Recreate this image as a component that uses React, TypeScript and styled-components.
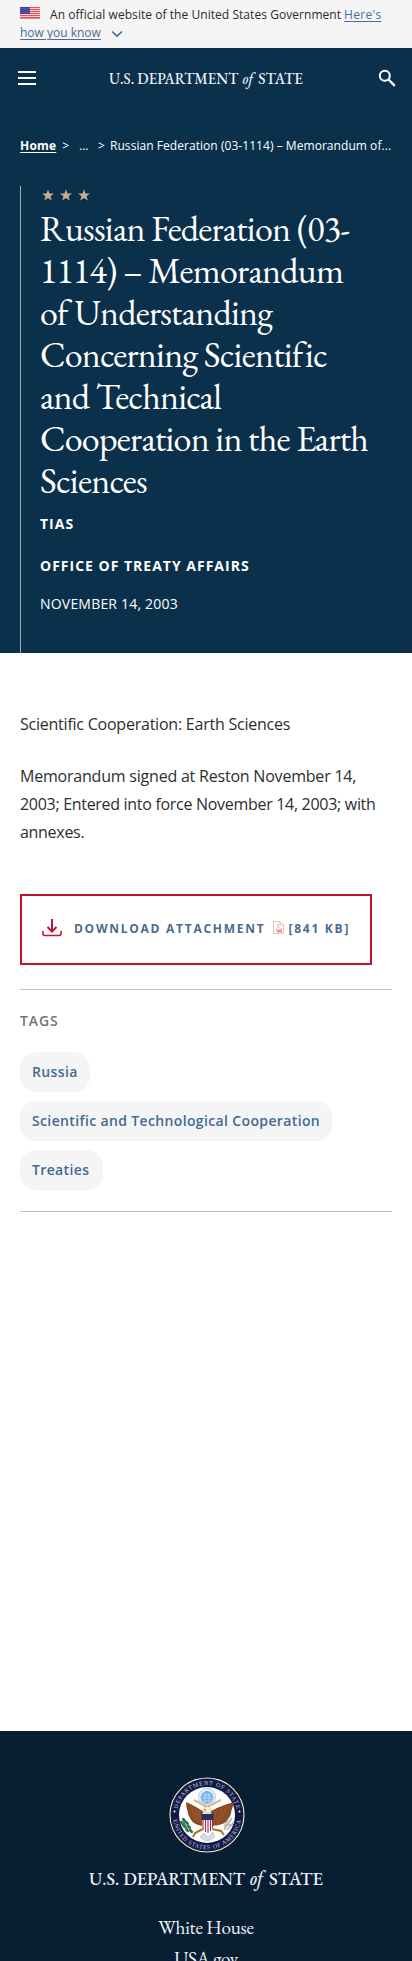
import React from "react";
import styled, { createGlobalStyle } from "styled-components";

const sans = `"Open Sans", "Noto Sans", sans-serif`;
const serif = `"EB Garamond", "Liberation Serif", serif`;

const GlobalStyle = createGlobalStyle`
  * { box-sizing: border-box; }
  body { margin: 0; background: #fff; font-family: ${sans}; color: #323a45; }
  h1, h2, p, ul { margin: 0; padding: 0; font-weight: 400; }
`;

const Page = styled.div`
  height: 1961px;
  overflow: hidden;
  display: flex;
  flex-direction: column;
`;

const Banner = styled.aside`
  height: 48px;
  padding: 6px 20px 0;
  background: #f5f5f5;
  font-size: 12px;
  line-height: 18px;
  white-space: nowrap;
  color: #2b2b2b;
`;

const BannerRow = styled.div`
  display: flex;
  align-items: center;
  height: 18px;
  letter-spacing: 0.05px;
`;

const FlagIcon = styled.svg`
  width: 20px;
  height: 12px;
  margin: -4px 10px 0 0;
`;

const BannerLink = styled.a<{ $tracking?: number }>`
  color: #4a6d94;
  text-decoration: underline;
  text-underline-offset: 2px;
  margin-left: 3px;
  letter-spacing: ${(p) => p.$tracking ?? 0}px;
  &:first-child { margin-left: 0; }
`;

const Chevron = styled.svg`
  width: 12px;
  height: 8px;
  margin: 1px 0 0 10px;
`;

const Header = styled.header`
  height: 605px;
  background: #0a304b;
  color: #fff;
  display: flex;
  flex-direction: column;
`;

const NavBar = styled.nav`
  height: 60px;
  display: flex;
  align-items: center;
  justify-content: space-between;
  padding: 0 16px 0 18px;
`;

const Burger = styled.span`
  width: 18px;
  height: 14px;
  border-top: 2px solid #fff;
  border-bottom: 2px solid #fff;
  display: flex;
  align-items: center;
  &::before { content: ""; width: 18px; height: 2px; background: #fff; }
`;

const Wordmark = styled.svg<{ $w: number; $h: number }>`
  width: ${(p) => p.$w}px;
  height: ${(p) => p.$h}px;
  display: block;
  flex: none;
  overflow: visible;
  font-family: ${serif};
  fill: #e9f3fa;
`;

const NavBrand = styled.div`
  padding: 2px 2px 0 0;
`;

const SearchIcon = styled.svg`
  width: 18px;
  height: 18px;
`;

const Breadcrumb = styled.div`
  margin-top: 28px;
  padding: 0 20px;
  height: 20px;
  display: flex;
  font-size: 12px;
  line-height: 20px;
  white-space: nowrap;
`;

const HomeLink = styled.a`
  width: 36px;
  font-weight: 700;
  letter-spacing: 0.2px;
  text-decoration: underline;
  text-underline-offset: 2px;
`;

const Crumb = styled.span<{ $w: number; $tracking?: number }>`
  width: ${(p) => p.$w}px;
  flex: none;
  letter-spacing: ${(p) => p.$tracking ?? 0}px;
`;

const Hero = styled.section`
  margin: 30px 20px 0;
  flex: 1;
  border-left: 1px solid #9fb0b0;
  padding: 0 20px 0 19px;
`;

const Stars = styled.svg`
  display: block;
  width: 50px;
  height: 12px;
  margin: 3px 0 0 2px;
  fill: #c9ae90;
`;

const Title = styled.h1`
  margin-top: 7px;
  height: 293px;
  font-family: ${serif};
  font-size: 36px;
  line-height: 42px;
  letter-spacing: -0.76px;
`;

const Meta = styled.p<{ $top: number; $bold?: boolean; $tracking: number }>`
  margin-top: ${(p) => p.$top}px;
  font-size: 14px;
  line-height: 20px;
  font-weight: ${(p) => (p.$bold ? 700 : 400)};
  letter-spacing: ${(p) => p.$tracking}px;
`;

const Main = styled.main`
  padding: 57px 20px 0;
  height: 1078px;
`;

const Paragraph = styled.p`
  font-size: 16px;
  line-height: 28px;
  margin-bottom: 24px;
  color: #2e2e2e;
`;

const Line = styled.span<{ $tracking: number }>`
  display: block;
  white-space: nowrap;
  letter-spacing: ${(p) => p.$tracking}px;
`;

const Download = styled.a`
  margin-top: 48px;
  width: 352px;
  height: 71px;
  border: 2px solid #bf1431;
  display: flex;
  align-items: center;
  padding: 0 0 2px 20px;
  font-size: 12px;
  font-weight: 700;
  letter-spacing: 1.74px;
  color: #4a6b90;
  white-space: nowrap;
`;

const DownloadIcon = styled.svg`
  width: 20px;
  height: 18px;
  margin: -2px 12px 0 0;
`;

const PdfIcon = styled.svg`
  width: 11px;
  height: 13px;
  margin: -2px 5px 0 7px;
`;

const TagSection = styled.section`
  margin-top: 24px;
  border-top: 1px solid #bfc1c1;
  border-bottom: 1px solid #bfc1c1;
  height: 223px;
  padding-top: 21px;
`;

const TagHeading = styled.h2`
  font-size: 14px;
  line-height: 20px;
  font-weight: 600;
  letter-spacing: 0.9px;
  color: #757575;
`;

const TagList = styled.ul`
  list-style: none;
  margin-top: 21px;
  display: flex;
  flex-direction: column;
  align-items: flex-start;
  gap: 10px;
`;

const Tag = styled.li<{ $w: number }>`
  width: ${(p) => p.$w}px;
  height: 39px;
  border-radius: 16px;
  background: #f5f5f5;
  box-shadow: 0 1px 1px rgba(0, 0, 0, 0.06);
  padding-left: 12px;
  font-size: 14px;
  line-height: 40px;
  font-weight: 600;
  letter-spacing: 0.36px;
  color: #446a94;
  white-space: nowrap;
`;

const Footer = styled.footer`
  height: 230px;
  background: #081f33;
  color: #e9f3fa;
  display: flex;
  flex-direction: column;
  align-items: center;
  padding-top: 45px;
`;

const Seal = styled.svg`
  width: 78px;
  height: 78px;
  margin: 0 0 16px 1px;
  flex: none;
`;

const FooterLink = styled.a<{ $top: number; $tracking: number }>`
  margin-top: ${(p) => p.$top}px;
  flex: none;
  font-family: ${serif};
  font-size: 19.2px;
  line-height: 30px;
  letter-spacing: ${(p) => p.$tracking}px;
`;

const STAR = "M0 -6L1.5 -1.9L6 -1.8L2.5 .9L3.8 5.2L0 2.7L-3.8 5.2L-2.5 .9L-6 -1.8L-1.5 -1.9Z";

const tags: [string, number][] = [
  ["Russia", 70],
  ["Scientific and Technological Cooperation", 312],
  ["Treaties", 83],
];

function StateWordmark({ width, height, weight = 400 }: { width: number; height: number; weight?: number }) {
  return (
    <Wordmark $w={width} $h={height} viewBox="0 0 234 18">
      <text x="0" y="15" fontSize="19.4" fontWeight={weight} textLength="156" lengthAdjust="spacingAndGlyphs">U.S. DEPARTMENT</text>
      <text x="161" y="15" fontSize="20" fontStyle="italic" fontWeight={weight} textLength="13" lengthAdjust="spacingAndGlyphs">of</text>
      <text x="180" y="15" fontSize="19.4" fontWeight={weight} textLength="54" lengthAdjust="spacingAndGlyphs">STATE</text>
    </Wordmark>
  );
}

function Flag() {
  return (
    <FlagIcon viewBox="0 0 20 12">
      <rect width="20" height="12" fill="#f8dfe0" />
      {[0, 2, 4, 6, 8, 10].map((y) => (
        <rect key={y} y={y} width="20" height="1.1" fill="#e25555" />
      ))}
      <rect y="11.4" width="20" height=".6" fill="#e25555" />
      <rect width="10" height="7" fill="#3a3fa0" />
      {[1, 3, 5].map((y) =>
        [1, 3, 5, 7, 9].map((x) => <circle key={`${x}-${y}`} cx={x} cy={y + 0.4} r=".4" fill="#b9bdf0" />)
      )}
    </FlagIcon>
  );
}

function GreatSeal() {
  return (
    <Seal viewBox="-39 -39 78 78">
      <defs>
        <path id="sealTop" d="M-30 0A30 30 0 0 1 30 0" />
        <path id="sealBottom" d="M-34.2 0A34.2 34.2 0 0 0 34.2 0" />
      </defs>
      <circle r="37" fill="#131a48" stroke="#f3f0c4" strokeWidth="1.1" />
      <circle r="28" fill="#fff" />
      <g fill="#c3c8dc" fontFamily="Liberation Serif, serif" fontSize="6" fontWeight="400">
        <text><textPath href="#sealTop" startOffset="6" textLength="82">DEPARTMENT OF STATE</textPath></text>
        <text><textPath href="#sealBottom" startOffset="5" textLength="97">UNITED STATES OF AMERICA</textPath></text>
      </g>
      <circle cx="-32.5" cy="-3.5" r="1" fill="#fff" />
      <circle cx="32.5" cy="-3.5" r="1" fill="#fff" />
      <circle cy="-18" r="8.6" fill="#e2f0fb" stroke="#a9cbe9" strokeWidth=".8" />
      <circle cy="-17.5" r="6.4" fill="#78b5e6" />
      <path d="M-4 -20H4M-5 -17H5M-4 -14H4M-2 -22V-12M2 -22V-12" stroke="#d0e8fa" strokeWidth=".6" />
      <path d="M-4 -4C-8 -6 -13 -10 -21 -13C-21 -7 -19 -4 -19 -1C-17 3 -16 6 -13 8C-10 10 -7 10 -5 11ZM4 -4C8 -6 15 -10 27 -13C26 -8 24 -5 24 -1C22 4 19 8 15 9C11 11 8 10 5 11Z" fill="#8b4b25" />
      <path d="M-16 -9L-11 6M-12 -7L-8 8M-8 -4L-6 8M20 -9L13 6M15 -7L10 8M9 -4L7 8" stroke="#a5632f" strokeWidth=".7" />
      <path d="M-13 -15L0 -8L14 -15" fill="none" stroke="#d8bc78" strokeWidth="2.2" />
      <path d="M-3 -2Q-4 -8 0 -9Q5 -8 4 -2Z" fill="#f5edda" stroke="#a88c68" strokeWidth=".5" />
      <path d="M-4 -5L-1 -6L-1 -4Z" fill="#dda332" />
      <path d="M-4 14L-12 18L-14 22M5 14L14 16L17 20" fill="none" stroke="#a17335" strokeWidth="2" />
      <path d="M-5 3H6V13Q4 17 .5 18Q-4 17 -5 13Z" fill="#fff" />
      <path d="M-4 5V15M-1.5 5V17M1 5V18M3.5 5V16M5.5 5V13" stroke="#a32945" strokeWidth="1.1" />
      <path d="M-5.5 -1H6.5V5H-5.5Z" fill="#27315e" />
      <path d="M-24 5L-19 16" stroke="#3e8357" strokeWidth="1.5" />
      {[[-23, 5], [-25, 8], [-20, 8], [-23, 11], [-18, 12], [-20, 15], [-16, 16]].map(([x, y]) => (
        <ellipse key={`${x}${y}`} cx={x} cy={y} rx="2.6" ry="1.4" fill="#2c764c" transform={`rotate(45 ${x} ${y})`} />
      ))}
      <path d="M17 15L25 3M20 15L27 7M17 12L22 3M19 10L26 10" stroke="#b5b5ad" strokeWidth="1.5" />
      <path d="M-7 22L-3 18L1 22L6 17L8 22L3 25L-1 26L-5 24Z" fill="#d8dce1" stroke="#aab0b8" strokeWidth=".5" />
    </Seal>
  );
}

export default function App() {
  return (
    <>
      <GlobalStyle />
      <Page>
        <Banner>
          <BannerRow>
            <Flag />
            <span>An official website of the United States Government</span>
            <BannerLink $tracking={0.3}>Here's</BannerLink>
          </BannerRow>
          <BannerRow>
            <BannerLink>how you know</BannerLink>
            <Chevron viewBox="0 0 12 8">
              <path d="M1 1.5L6 6.2L11 1.5" fill="none" stroke="#4a6d94" strokeWidth="1.7" />
            </Chevron>
          </BannerRow>
        </Banner>

        <Header>
          <NavBar>
            <Burger />
            <NavBrand>
              <StateWordmark width={194} height={15} weight={500} />
            </NavBrand>
            <SearchIcon viewBox="0 0 18 18" fill="none" stroke="#fff">
              <circle cx="6.8" cy="6.8" r="5" strokeWidth="2" />
              <path d="M10.5 10.5L16.8 16.8" strokeWidth="2.4" />
            </SearchIcon>
          </NavBar>
          <Breadcrumb>
            <HomeLink>Home</HomeLink>
            <Crumb $w={23}>&nbsp;&nbsp;&gt;</Crumb>
            <Crumb $w={19}>...</Crumb>
            <Crumb $w={12}>&gt;</Crumb>
            <Crumb $w={282} $tracking={0.05}>Russian Federation (03-1114) – Memorandum of...</Crumb>
          </Breadcrumb>
          <Hero>
            <Stars viewBox="0 0 50 12">
              {[6, 24, 42].map((x) => (
                <path key={x} d={STAR} transform={`translate(${x} 6.3)`} />
              ))}
            </Stars>
            <Title>
              Russian Federation (03-1114) – Memorandum of Understanding Concerning Scientific and
              Technical Cooperation in the Earth Sciences
            </Title>
            <Meta $top={13} $bold $tracking={1}>TIAS</Meta>
            <Meta $top={22} $bold $tracking={1}>OFFICE OF TREATY AFFAIRS</Meta>
            <Meta $top={18} $tracking={0.2}>NOVEMBER 14, 2003</Meta>
          </Hero>
        </Header>

        <Main>
          <Paragraph>
            <Line $tracking={-0.23}>Scientific Cooperation: Earth Sciences</Line>
          </Paragraph>
          <Paragraph>
            <Line $tracking={-0.21}>Memorandum signed at Reston November 14, </Line>
            <Line $tracking={-0.3}>2003; Entered into force November 14, 2003; with </Line>
            <Line $tracking={-0.3}>annexes.</Line>
          </Paragraph>
          <Download>
            <DownloadIcon viewBox="0 0 20 18" fill="none" stroke="#bf1431" strokeWidth="2">
              <path d="M10 0V12M5.5 8L10 12.5L14.5 8" />
              <path d="M1 12V14.5Q1 16.5 3 16.5H17Q19 16.5 19 14.5V12" strokeWidth="1.6" />
            </DownloadIcon>
            <span>DOWNLOAD ATTACHMENT</span>
            <PdfIcon viewBox="0 0 11 13" fill="none" stroke="#eba39d" strokeWidth=".7">
              <path d="M.5 .5H7L10.5 4V12.5H.5ZM7 .5V4H10.5" />
              <path d="M2.5 10Q5.5 7 4.8 2.5Q5 7 8.8 8.3Q5 8 2.5 10" />
              <path d="M4 9.3H9V11.3H4Z" fill="#d9837c" stroke="none" />
            </PdfIcon>
            <span>[841 KB]</span>
          </Download>
          <TagSection>
            <TagHeading>TAGS</TagHeading>
            <TagList>
              {tags.map(([label, width]) => (
                <Tag key={label} $w={width}>{label}</Tag>
              ))}
            </TagList>
          </TagSection>
        </Main>

        <Footer>
          <GreatSeal />
          <StateWordmark width={234} height={18} weight={500} />
          <FooterLink $top={25} $tracking={-0.25}>White House</FooterLink>
          <FooterLink $top={1} $tracking={-0.45}>USA.gov</FooterLink>
        </Footer>
      </Page>
    </>
  );
}
